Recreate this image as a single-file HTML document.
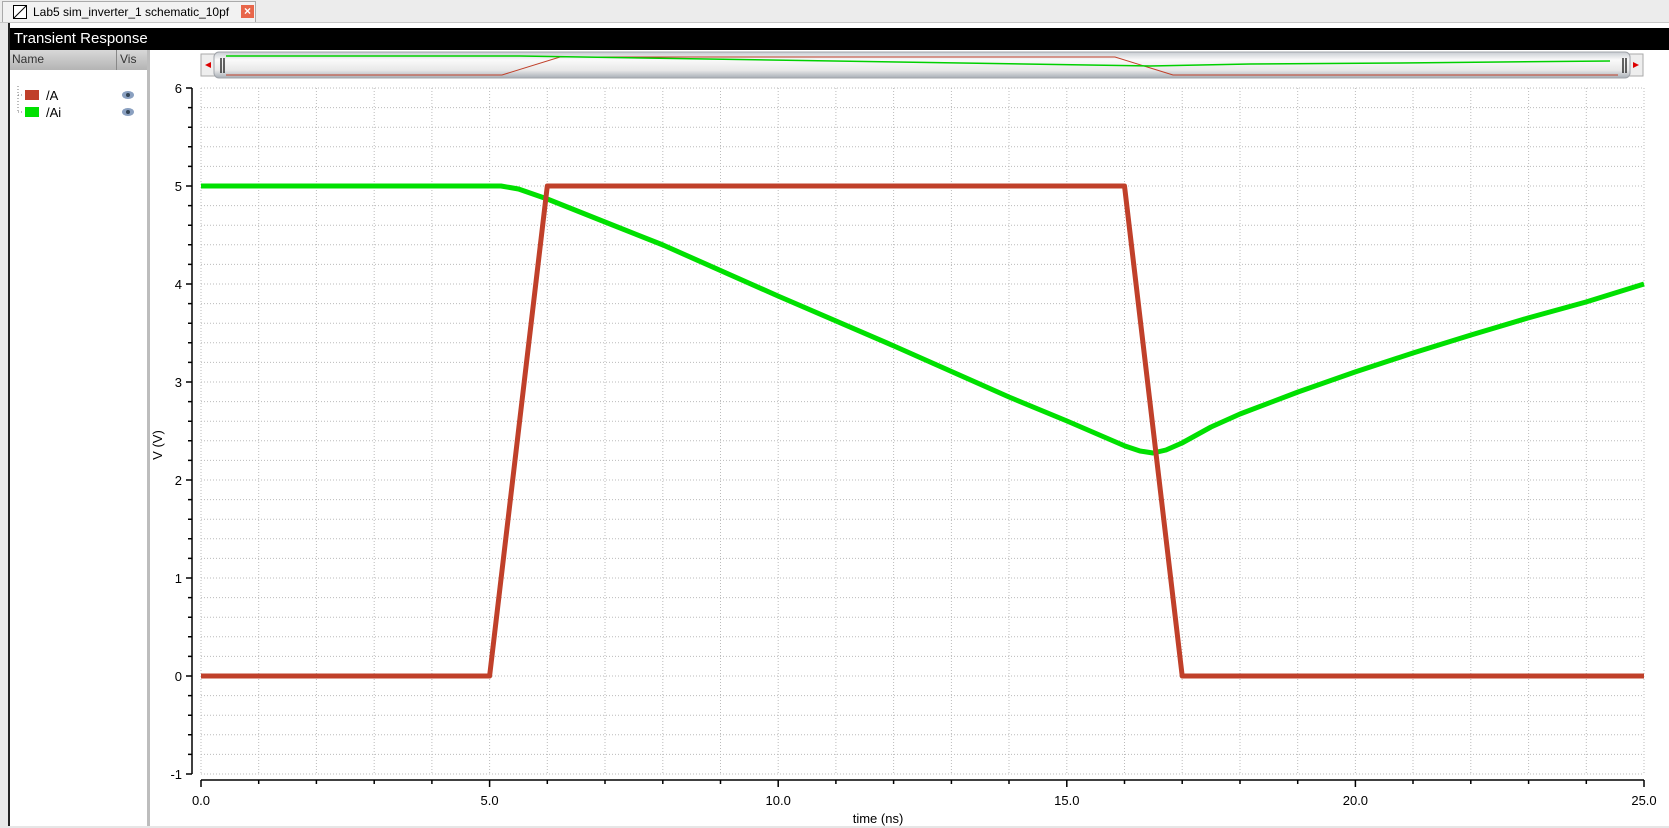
<!DOCTYPE html>
<html><head><style>
body{margin:0;width:1669px;height:828px;overflow:hidden;background:#fff;font-family:"Liberation Sans",sans-serif;position:relative}
.tabbar{position:absolute;left:0;top:0;width:1669px;height:22px;background:#ececec;border-bottom:1px solid #c8c8c8}
.tab{position:absolute;left:2px;top:1px;height:20px;width:252px;background:#f2f2f2;border:1px solid #aaa;border-bottom:none;font-size:12px;line-height:20px;white-space:nowrap}
.title{position:absolute;left:10px;top:28px;width:1659px;height:22px;background:#000;color:#fff;font-size:15px;line-height:22px;padding-left:4px;box-sizing:border-box}
.left{position:absolute;left:10px;top:50px;width:138px;height:776px;background:#fff}
.hdr{position:absolute;left:10px;top:50px;width:138px;height:20px;background:linear-gradient(#d8d8d8,#b4b4b4);font-size:12px;color:#333}
</style></head><body>
<div class="tabbar"><div class="tab"><span style="position:absolute;left:10px;top:3px;width:12px;height:12px;border:1px solid #000;background:#fff"></span><svg style="position:absolute;left:11px;top:4px" width="12" height="12"><line x1="0" y1="12" x2="12" y2="0" stroke="#000"/></svg><span style="position:absolute;left:30px;white-space:nowrap">Lab5 sim_inverter_1 schematic_10pf</span><span style="position:absolute;left:238px;top:3px;width:13px;height:13px;background:#e8664a;color:#fff;font-size:12px;line-height:13px;text-align:center;font-weight:bold">×</span></div></div>
<div style="position:absolute;left:0;top:23px;width:10px;height:805px;background:#e8e8e8"></div>
<div style="position:absolute;left:8px;top:23px;width:2px;height:803px;background:#222"></div>
<div class="title">Transient Response</div>
<div class="left"></div>
<div class="hdr"><span style="position:absolute;left:2px;top:2px">Name</span><span style="position:absolute;left:106px;top:0;height:20px;border-left:1px solid #888"></span><span style="position:absolute;left:110px;top:2px">Vis</span></div>
<div style="position:absolute;left:147px;top:50px;width:3px;height:776px;background:#bdbdbd"></div>
<svg style="position:absolute;left:10px;top:80px" width="138" height="40">
<line x1="8" y1="6" x2="8" y2="32" stroke="#777" stroke-dasharray="1,2"/>
<line x1="8" y1="15" x2="14" y2="15" stroke="#777" stroke-dasharray="1,2"/>
<line x1="8" y1="32" x2="14" y2="32" stroke="#777" stroke-dasharray="1,2"/>
<rect x="15" y="10" width="14" height="10" fill="#c0402a"/>
<rect x="15" y="27" width="14" height="10" fill="#00e000"/>
<text x="36" y="20" font-size="13" font-family="Liberation Sans">/A</text>
<text x="36" y="37" font-size="13" font-family="Liberation Sans">/Ai</text>
<ellipse cx="118" cy="15" rx="6" ry="4" fill="#8aa0c0"/><circle cx="118" cy="15" r="2" fill="#345"/>
<ellipse cx="118" cy="32" rx="6" ry="4" fill="#8aa0c0"/><circle cx="118" cy="32" r="2" fill="#345"/>
</svg>
<div style="position:absolute;left:0;top:826px;width:1669px;height:2px;background:#e6e6e6"></div>
<svg style="position:absolute;left:0;top:0" width="1669" height="828">
<defs><linearGradient id="g" x1="0" y1="0" x2="0" y2="1"><stop offset="0" stop-color="#c8ccd2"/><stop offset="0.3" stop-color="#fafafa"/><stop offset="0.7" stop-color="#e8e8e8"/><stop offset="1" stop-color="#a8aeb6"/></linearGradient></defs>
<rect x="201" y="54" width="15" height="22" fill="#eee" stroke="#aaa"/>
<polygon points="205,65 211,62 211,68" fill="#d00"/>
<rect x="1628" y="54" width="15" height="22" fill="#eee" stroke="#aaa"/>
<polygon points="1639,65 1633,62 1633,68" fill="#d00"/>
<rect x="214" y="52" width="1416" height="26" rx="5" fill="url(#g)" stroke="#a0a4aa"/>
<line x1="221" y1="58" x2="221" y2="73" stroke="#000" stroke-width="1.2"/><line x1="224" y1="58" x2="224" y2="73" stroke="#000" stroke-width="1.2"/>
<line x1="1623" y1="58" x2="1623" y2="73" stroke="#000" stroke-width="1.2"/><line x1="1626" y1="58" x2="1626" y2="73" stroke="#000" stroke-width="1.2"/>
<polyline points="226,75 502,75 560,57 1115,57 1173,75 1618,75" fill="none" stroke="#c0402a"/>
<polyline points="226,56 520,56 1150,66 1200,65 1250,64 1400,63 1500,62 1610,61" fill="none" stroke="#00d000" stroke-width="1.5"/>
<g stroke="#bbb" stroke-dasharray="1,2" stroke-width="1">
<path d="M201 88H1644M201 107.6H1644M201 127.2H1644M201 146.8H1644M201 166.4H1644M201 186H1644M201 205.6H1644M201 225.2H1644M201 244.8H1644M201 264.4H1644M201 284H1644M201 303.6H1644M201 323.2H1644M201 342.8H1644M201 362.4H1644M201 382H1644M201 401.6H1644M201 421.2H1644M201 440.8H1644M201 460.4H1644M201 480H1644M201 499.6H1644M201 519.2H1644M201 538.8H1644M201 558.4H1644M201 578H1644M201 597.6H1644M201 617.2H1644M201 636.8H1644M201 656.4H1644M201 676H1644M201 695.6H1644M201 715.2H1644M201 734.8H1644M201 754.4H1644M201 774H1644"/>
<path d="M201 88V774M258.7 88V774M316.4 88V774M374.2 88V774M431.9 88V774M489.6 88V774M547.3 88V774M605 88V774M662.8 88V774M720.5 88V774M778.2 88V774M835.9 88V774M893.6 88V774M951.4 88V774M1009 88V774M1066.8 88V774M1124.5 88V774M1182.2 88V774M1240 88V774M1297.7 88V774M1355.4 88V774M1413 88V774M1470.8 88V774M1528.6 88V774M1586.3 88V774M1644 88V774"/>
</g>
<g stroke="#000" stroke-width="1.5" fill="none">
<path d="M192 88V774M186 88H192M186 186H192M186 284H192M186 382H192M186 480H192M186 578H192M186 676H192M186 774H192"/>
<path d="M188 107.6H192M188 127.2H192M188 146.8H192M188 166.4H192M188 205.6H192M188 225.2H192M188 244.8H192M188 264.4H192M188 303.6H192M188 323.2H192M188 342.8H192M188 362.4H192M188 401.6H192M188 421.2H192M188 440.8H192M188 460.4H192M188 499.6H192M188 519.2H192M188 538.8H192M188 558.4H192M188 597.6H192M188 617.2H192M188 636.8H192M188 656.4H192M188 695.6H192M188 715.2H192M188 734.8H192M188 754.4H192"/>
<path d="M201 780H1644M201 780V787M258.7 780V784M316.4 780V784M374.2 780V784M431.9 780V784M489.6 780V787M547.3 780V784M605 780V784M662.8 780V784M720.5 780V784M778.2 780V787M835.9 780V784M893.6 780V784M951.4 780V784M1009 780V784M1066.8 780V787M1124.5 780V784M1182.2 780V784M1240 780V784M1297.7 780V784M1355.4 780V787M1413 780V784M1470.8 780V784M1528.6 780V784M1586.3 780V784M1644 780V787"/>
</g>
<g font-family="Liberation Sans" font-size="13" fill="#000" text-anchor="end">
<text x="182" y="93">6</text><text x="182" y="191">5</text><text x="182" y="289">4</text><text x="182" y="387">3</text><text x="182" y="485">2</text><text x="182" y="583">1</text><text x="182" y="681">0</text><text x="182" y="779">-1</text>
</g>
<g font-family="Liberation Sans" font-size="13" fill="#000" text-anchor="middle">
<text x="201" y="805">0.0</text><text x="489.6" y="805">5.0</text><text x="778.2" y="805">10.0</text><text x="1066.8" y="805">15.0</text><text x="1355.4" y="805">20.0</text><text x="1644" y="805">25.0</text>
<text x="878" y="823">time (ns)</text>
<text transform="translate(162,445) rotate(-90)">V (V)</text>
</g>
<polyline points="201,186 501,186 518.5,189 547.3,199 605,222 663,245 778,296 894,346 1009,397 1067,421 1125,446 1140,451 1153,453 1166,450 1182,443 1211,427 1240,414 1298,392 1355,372 1413,353 1471,335 1528,318 1586,302 1644,284" fill="none" stroke="#00e000" stroke-width="5" stroke-linejoin="round"/>
<polyline points="201,676 489.6,676 547.3,186 1124.5,186 1182.2,676 1644,676" fill="none" stroke="#c0402a" stroke-width="5" stroke-linejoin="round"/>
</svg>
</body></html>
